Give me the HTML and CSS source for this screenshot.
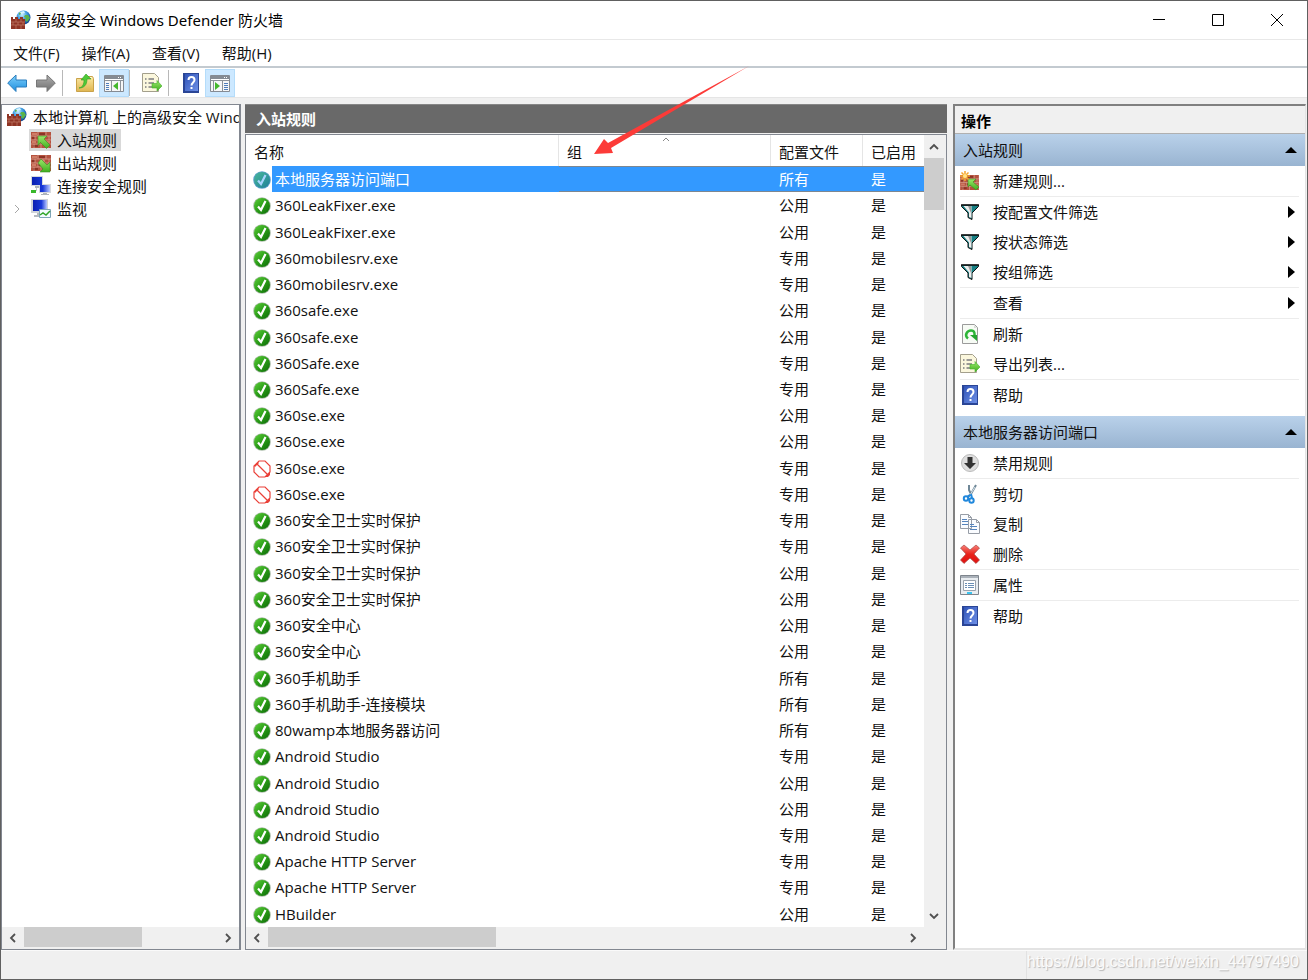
FILE: index.html
```html
<!DOCTYPE html>
<html lang="zh-CN">
<head>
<meta charset="utf-8">
<meta name="viewport" content="width=device-width, initial-scale=1">
<title>高级安全 Windows Defender 防火墙</title>
<link rel="stylesheet" href="styles.css">
</head>
<body>
<svg class="sprite" aria-hidden="true">
<defs>
<linearGradient id="gGreen" x1="0" y1="0" x2="1" y2="1"><stop offset="0" stop-color="#5fd03a"/><stop offset=".5" stop-color="#2a9d17"/><stop offset="1" stop-color="#0c6a08"/></linearGradient>
<linearGradient id="gTeal" x1="0" y1="0" x2="1" y2="1"><stop offset="0" stop-color="#49b89a"/><stop offset="1" stop-color="#1f7f99"/></linearGradient>
<linearGradient id="gBlue" x1="0" y1="0" x2="0" y2="1"><stop offset="0" stop-color="#7fd0fa"/><stop offset="1" stop-color="#1e8fe0"/></linearGradient>
<linearGradient id="gGray" x1="0" y1="0" x2="0" y2="1"><stop offset="0" stop-color="#b0b0b0"/><stop offset="1" stop-color="#6e6e6e"/></linearGradient>
<linearGradient id="gBook" x1="0" y1="0" x2="1" y2="1"><stop offset="0" stop-color="#3054b8"/><stop offset="1" stop-color="#6d8fe6"/></linearGradient>
<linearGradient id="gScreen" x1="0" y1="0" x2="1" y2="0"><stop offset="0" stop-color="#0a1fb0"/><stop offset=".6" stop-color="#1838d8"/><stop offset="1" stop-color="#b8c8ff"/></linearGradient>
<linearGradient id="gArrow" x1="0" y1="0" x2="0" y2="1"><stop offset="0" stop-color="#9be86a"/><stop offset="1" stop-color="#3fae1e"/></linearGradient>
<linearGradient id="gFolder" x1="0" y1="0" x2="0" y2="1"><stop offset="0" stop-color="#fbe9a4"/><stop offset="1" stop-color="#dfb550"/></linearGradient>
<linearGradient id="gRed" x1="0" y1="0" x2="0" y2="1"><stop offset="0" stop-color="#f98078"/><stop offset=".5" stop-color="#e8241c"/><stop offset="1" stop-color="#e01010"/></linearGradient>
<radialGradient id="gGlobe" cx=".4" cy=".3" r=".7"><stop offset="0" stop-color="#c8f0ff"/><stop offset=".5" stop-color="#3d9be0"/><stop offset="1" stop-color="#12458f"/></radialGradient>
</defs>
<symbol id="bricks" viewBox="0 0 20 16">
<path fill="#b5523f" d="M0 0h20v16H0z"/>
<path fill="#cf7c66" d="M1 1h5v2H1zM9 5h5v2H9zM15 9h4v2h-4zM1 9h4v2H1z"/><path fill="#8c3426" d="M8 1h6v2H8zM1 5h3v2H1zM7 9h5v2H7zM2 13h5v2H2z"/>
<path stroke="#d8a592" stroke-width=".7" fill="none" d="M0 4h20M0 8h20M0 12h20M7 0v4M15 0v4M4 4v4M12 4v4M18 4v4M7 8v4M14 8v4M3 12v4M10 12v4M17 12v4"/>
</symbol>
<symbol id="firewall" viewBox="0 0 20 20">
<circle cx="12.500" cy="7.500" r="7" fill="url(#gGlobe)"/>
<path fill="#5cb548" d="M14 5l3 0 2 3-3 4-2-2 1-2-2-1zM8 3l2-1 0 2-2 1z"/><path fill="#d8f4ff" d="M9 2l4-1 1 2-4 1z"/>
<path fill="#8f3424" d="M0 9h14v10H0zM0 7h2v2H0zM4 7h3v2H4zM9 7h3v2H9z"/>
<path stroke="#c07d68" stroke-width=".7" fill="none" d="M0 12h14M0 15h14M5 9v3M10 9v3M2 12v3M7 12v3M12 12v3M5 15v4M10 15v4"/>
</symbol>
<symbol id="inbound" viewBox="0 0 20 20"><use href="#bricks" y="2" width="20" height="16"/><path fill="url(#gArrow)" stroke="#3b8f22" stroke-width=".6" d="M7 6h9l-3 3 6 6-3.500 3.500-6-6-2.500 3z"/></symbol>
<symbol id="outbound" viewBox="0 0 20 20"><use href="#bricks" y="2" width="20" height="16"/><path fill="url(#gArrow)" stroke="#3b8f22" stroke-width=".6" d="M10 6l6 6 3-3v10H9l3-3-5-6z"/></symbol>
<symbol id="newrule" viewBox="0 0 20 20"><use href="#bricks" y="4" width="19" height="15"/><path fill="url(#gArrow)" stroke="#3b8f22" stroke-width=".6" d="M8 8h8l-3 3 6 5-3 3-6-5-2 2z"/><path stroke="#f5a52a" stroke-width="1.500" d="M5 0v10M0 5h10M1.500 1.500l7 7M8.500 1.500l-7 7"/><circle cx="5" cy="5" r="2" fill="#ffe48a"/></symbol>
<symbol id="network" viewBox="0 0 20 20"><path fill="#d7d9dd" d="M0 0h12v10H0zM8 8h12v9H8z"/><path fill="url(#gScreen)" d="M1 1h10v8H1zM9 9h10v7H9z"/><path fill="#aeb4bb" d="M4 10h4v2H4zM12 17h4v1h2v1h-8v-1h2z"/><path fill="none" stroke="#c4c8cc" d="M5.500 12v3"/><path fill="#38b82a" d="M0 14h5v3H0z"/></symbol>
<symbol id="monitor" viewBox="0 0 20 20"><path fill="#cfd3d8" d="M0 0h17v14H0z"/><path fill="url(#gScreen)" d="M2 1h14v11H2z"/><path fill="#b4bac0" d="M6 14h4v2h2v2H3v-2h3z"/><path fill="#f4fbff" stroke="#7fa5b8" d="M8.500 10.500h11v8h-11z"/><path fill="none" stroke="#31a52a" stroke-width="1.500" d="M9 16l3-2 3 2 4-4"/></symbol>
<symbol id="ok" viewBox="0 0 18 18"><circle cx="9" cy="9" r="8.800" fill="#a9bba7"/><circle cx="9" cy="9" r="8" fill="url(#gGreen)"/><path fill="none" stroke="#fff" stroke-width="2.200" d="M5 9.500l3 3.500 4.500-9"/></symbol>
<symbol id="okSel" viewBox="0 0 18 18"><circle cx="9" cy="9" r="8.800" fill="#5f9fd0"/><circle cx="9" cy="9" r="8" fill="url(#gTeal)"/><path fill="none" stroke="#a8d4ff" stroke-width="2.200" d="M5 9.500l3 3.500 4.500-9"/></symbol>
<symbol id="block" viewBox="0 0 18 18"><path fill="#fff" stroke="#ea4038" stroke-width="1.200" d="M6 1h6l5 5v6l-5 5H6l-5-5V6z"/><path stroke="#ea4038" stroke-width="1.200" d="M3.500 3.500l11 11"/><path fill="#ea4038" d="M1 6l4-4 1 1-4 4zM12 17l5-5v3l-2 2z"/></symbol>
<symbol id="back" viewBox="0 0 20 20"><path fill="url(#gBlue)" stroke="#2a7dbd" d="M.700 10L9 2v5h10.500v7H9v4.500z"/></symbol>
<symbol id="forward" viewBox="0 0 20 20"><path fill="url(#gGray)" stroke="#777" d="M19.300 10L11 2v5H.500v7H11v4.500z"/></symbol>
<symbol id="folder" viewBox="0 0 20 20"><path fill="url(#gFolder)" stroke="#c9a24a" d="M1.500 5.500h7l2-2h7l1 2v13h-17z"/><path fill="#fff6cf" d="M11 4h6v1h-6z"/><path fill="#4fca38" stroke="#2f9c22" stroke-width=".600" d="M4 15c4-1 5-4 5-8H6l5-6 5 5h-4c0 6-3 9-8 9z"/></symbol>
<symbol id="paneL" viewBox="0 0 20 20"><path fill="#f7f7f7" stroke="#858b93" d="M.500 2.500h19v16H.500z"/><path fill="#858b93" d="M1 3h18v3H1z"/><path fill="#fff" d="M14 4h1v1h-1zM16 4h1v1h-1zM1 6h18v1H1z"/><path stroke="#8d939a" d="M7.500 8v10M16.500 8v10M1 7.500h18"/><path stroke="#4f7dbb" d="M2 10.500h3M2 12.500h3M2 14.500h3M2 16.500h3"/><path fill="#45b82c" d="M14 9v8l-5-4z"/></symbol>
<symbol id="paneR" viewBox="0 0 20 20"><path fill="#f7f7f7" stroke="#858b93" d="M.500 2.500h19v16H.500z"/><path fill="#858b93" d="M1 3h18v3H1z"/><path fill="#fff" d="M14 4h1v1h-1zM16 4h1v1h-1zM1 6h18v1H1z"/><path stroke="#8d939a" d="M3.500 8v10M12.500 8v10M1 7.500h18"/><path stroke="#4f7dbb" d="M14 10.500h4M14 12.500h4M14 14.500h4M14 16.500h4"/><path fill="#45b82c" d="M5 9v8l5-4z"/></symbol>
<symbol id="export" viewBox="0 0 20 20"><path fill="#fbf7dd" stroke="#a39f8c" d="M.500 .500h12l4 4v14h-16z"/><path stroke="#7c7c80" stroke-width="1.400" stroke-dasharray="1.500 2 8 0" d="M3 6h9M3 10h9M3 14h9"/><path fill="url(#gArrow)" stroke="#43b42b" stroke-width=".600" d="M10 10.500h5V7.500l5 5.500-5 5v-3h-5z"/></symbol>
<symbol id="help" viewBox="0 0 18 20"><path fill="#2a4596" d="M1 0h16v20H1z"/><path fill="url(#gBook)" d="M3 1h13v17H3z"/><path fill="none" stroke="#fff" stroke-width="2" d="M6.500 7c0-4 6-4 6 0 0 2.500-3 2.500-3 5.500"/><path fill="#fff" d="M8.500 14h2v2h-2z"/></symbol>
<symbol id="filter" viewBox="0 0 20 20"><path fill="#178083" stroke="#111" d="M1.500 3h17v1.500L12 11v6.500l-4-2V11L1.500 4.500z"/><path fill="#eee" d="M3.500 4h8v12l-2.500-1v-4.500z"/><path fill="#999" d="M8 4h3v7z"/><path stroke="#111" stroke-width="1.300" d="M1 3h18"/></symbol>
<symbol id="refresh" viewBox="0 0 20 20"><path fill="#f7fbf5" stroke="#9b9b9b" d="M2.500 .500h12l3 3v16h-15z"/><path fill="#d8dcd8" d="M14 1v3h3z"/><path fill="none" stroke="#2db538" stroke-width="2.500" d="M8 14.500c-4-3-1-8 3-8 4 0 4 4 3 6"/><path fill="#24a62f" d="M10 11h7v6z"/></symbol>
<symbol id="disable" viewBox="0 0 20 20"><circle cx="10" cy="10" r="8.500" fill="#dedede" stroke="#bbb"/><path fill="#333" d="M7.500 4h5v6H16l-6 6-6-6h3.500z"/></symbol>
<symbol id="cut" viewBox="0 0 20 20"><path fill="none" stroke="#6f8797" stroke-width="2" d="M9 1v5l2 4M16 1l-5 9-3 3"/><path stroke="#d5e3ec" d="M15 3l-5 8"/><circle cx="6" cy="14.500" r="2.200" fill="none" stroke="#2188dc" stroke-width="2"/><circle cx="11.500" cy="16.500" r="2.200" fill="none" stroke="#2188dc" stroke-width="2"/><path stroke="#2188dc" stroke-width="2" d="M11 10l1 4M10 11l-3 2"/></symbol>
<symbol id="copy" viewBox="0 0 20 20"><path fill="#fafcff" stroke="#979da6" d="M.500 .500h8l3 3v11H.500zM8.500 5.500h8l3 3v11h-11z"/><path stroke="#5584bd" d="M2 5.500h5M2 7.500h6M2 10.500h6M10 10.500h4M10 12.500h7M10 15.500h7"/><path fill="none" stroke="#979da6" d="M8.500 .500v3h3M16.500 5.500v3h3"/></symbol>
<symbol id="delete" viewBox="0 0 20 20"><path fill="url(#gRed)" stroke="#a84a46" stroke-width=".700" d="M4 1l6 5 6-5 3.500 3-5.500 6 5.500 6-3.500 3.500-6-5.500-6 5.500L.500 16 6 10 .500 4z"/></symbol>
<symbol id="props" viewBox="0 0 20 20"><path fill="#e9edf1" stroke="#7e858d" d="M.500 .500h18v19H.500z"/><path fill="#aab1b9" d="M1 1h17v2H1z"/><path fill="#fff" stroke="#9aa3ad" d="M3.500 5.500h12v10h-12z"/><path stroke="#6b8fb5" d="M5 8.500h2M8 8.500h6M5 10.500h2M8 10.500h6M5 12.500h2M8 12.500h6"/><path fill="#39c3f0" d="M7 17h5v2H7z"/></symbol>
<symbol id="chev" viewBox="0 0 10 10"><path fill="none" stroke="#505050" stroke-width="1.800" d="M7 1L3 5l4 4"/></symbol>
</svg>

<div class="window">
<header class="titlebar">
<svg class="icon"><use href="#firewall"/></svg>
<h1>高级安全 Windows Defender 防火墙</h1>
<div class="controls">
<button type="button" aria-label="最小化"><svg viewBox="0 0 12 12"><path d="M0 5.500h12"/></svg></button>
<button type="button" aria-label="最大化"><svg viewBox="0 0 12 12"><path d="M.500 .500h11v11H.500z"/></svg></button>
<button type="button" aria-label="关闭"><svg viewBox="0 0 12 12"><path d="M0 0l12 12M12 0L0 12"/></svg></button>
</div>
</header>
<nav class="menubar">
<button type="button">文件(F)</button><button type="button">操作(A)</button><button type="button">查看(V)</button><button type="button">帮助(H)</button>
</nav>
<div class="toolbar">
<button type="button" aria-label="后退"><svg class="icon"><use href="#back"/></svg></button>
<button type="button" aria-label="前进"><svg class="icon"><use href="#forward"/></svg></button>
<span class="divider"></span>
<button type="button" aria-label="上一级"><svg class="icon"><use href="#folder"/></svg></button>
<button type="button" class="on" aria-label="显示控制台树"><svg class="icon"><use href="#paneL"/></svg></button>
<span class="divider"></span>
<button type="button" aria-label="导出列表"><svg class="icon"><use href="#export"/></svg></button>
<span class="divider"></span>
<button type="button" aria-label="帮助"><svg class="icon"><use href="#help"/></svg></button>
<button type="button" class="on" aria-label="显示操作窗格"><svg class="icon"><use href="#paneR"/></svg></button>
</div>

<main class="panes">
<section class="tree-pane">
<ul class="tree">
<li class="root"><svg class="icon"><use href="#firewall"/></svg><span>本地计算机 上的高级安全 Windows Defender 防火墙</span></li>
<li><span class="node current"><svg class="icon"><use href="#inbound"/></svg>入站规则</span></li>
<li><span class="node"><svg class="icon"><use href="#outbound"/></svg>出站规则</span></li>
<li><span class="node"><svg class="icon"><use href="#network"/></svg>连接安全规则</span></li>
<li class="closed"><svg class="expander" viewBox="0 0 10 10"><path d="M3 1l4 4-4 4"/></svg><span class="node"><svg class="icon"><use href="#monitor"/></svg>监视</span></li>
</ul>
<div class="hscroll"><button type="button" aria-label="向左"><svg><use href="#chev"/></svg></button><div class="track"><div class="thumb half"></div></div><button type="button" aria-label="向右"><svg class="flip"><use href="#chev"/></svg></button></div>
</section>

<section class="rules-pane">
<h2>入站规则</h2>
<div class="listbox">
<div class="rules">
<table>
<colgroup><col><col class="c-group"><col class="c-profile"><col class="c-enabled"></colgroup>
<thead><tr><th>名称</th><th><div class="sorted">组<svg class="sort" viewBox="0 0 8 5"><path d="M1 4l3-3 3 3"/></svg></div></th><th>配置文件</th><th>已启用</th></tr></thead>
<tbody>
<tr class="selected"><td><svg><use href="#okSel"/></svg>本地服务器访问端口</td><td></td><td>所有</td><td>是</td></tr>
<tr><td><svg><use href="#ok"/></svg>360LeakFixer.exe</td><td></td><td>公用</td><td>是</td></tr>
<tr><td><svg><use href="#ok"/></svg>360LeakFixer.exe</td><td></td><td>公用</td><td>是</td></tr>
<tr><td><svg><use href="#ok"/></svg>360mobilesrv.exe</td><td></td><td>专用</td><td>是</td></tr>
<tr><td><svg><use href="#ok"/></svg>360mobilesrv.exe</td><td></td><td>专用</td><td>是</td></tr>
<tr><td><svg><use href="#ok"/></svg>360safe.exe</td><td></td><td>公用</td><td>是</td></tr>
<tr><td><svg><use href="#ok"/></svg>360safe.exe</td><td></td><td>公用</td><td>是</td></tr>
<tr><td><svg><use href="#ok"/></svg>360Safe.exe</td><td></td><td>专用</td><td>是</td></tr>
<tr><td><svg><use href="#ok"/></svg>360Safe.exe</td><td></td><td>专用</td><td>是</td></tr>
<tr><td><svg><use href="#ok"/></svg>360se.exe</td><td></td><td>公用</td><td>是</td></tr>
<tr><td><svg><use href="#ok"/></svg>360se.exe</td><td></td><td>公用</td><td>是</td></tr>
<tr><td><svg><use href="#block"/></svg>360se.exe</td><td></td><td>专用</td><td>是</td></tr>
<tr><td><svg><use href="#block"/></svg>360se.exe</td><td></td><td>专用</td><td>是</td></tr>
<tr><td><svg><use href="#ok"/></svg>360安全卫士实时保护</td><td></td><td>专用</td><td>是</td></tr>
<tr><td><svg><use href="#ok"/></svg>360安全卫士实时保护</td><td></td><td>专用</td><td>是</td></tr>
<tr><td><svg><use href="#ok"/></svg>360安全卫士实时保护</td><td></td><td>公用</td><td>是</td></tr>
<tr><td><svg><use href="#ok"/></svg>360安全卫士实时保护</td><td></td><td>公用</td><td>是</td></tr>
<tr><td><svg><use href="#ok"/></svg>360安全中心</td><td></td><td>公用</td><td>是</td></tr>
<tr><td><svg><use href="#ok"/></svg>360安全中心</td><td></td><td>公用</td><td>是</td></tr>
<tr><td><svg><use href="#ok"/></svg>360手机助手</td><td></td><td>所有</td><td>是</td></tr>
<tr><td><svg><use href="#ok"/></svg>360手机助手-连接模块</td><td></td><td>所有</td><td>是</td></tr>
<tr><td><svg><use href="#ok"/></svg>80wamp本地服务器访问</td><td></td><td>所有</td><td>是</td></tr>
<tr><td><svg><use href="#ok"/></svg>Android Studio</td><td></td><td>专用</td><td>是</td></tr>
<tr><td><svg><use href="#ok"/></svg>Android Studio</td><td></td><td>公用</td><td>是</td></tr>
<tr><td><svg><use href="#ok"/></svg>Android Studio</td><td></td><td>公用</td><td>是</td></tr>
<tr><td><svg><use href="#ok"/></svg>Android Studio</td><td></td><td>专用</td><td>是</td></tr>
<tr><td><svg><use href="#ok"/></svg>Apache HTTP Server</td><td></td><td>专用</td><td>是</td></tr>
<tr><td><svg><use href="#ok"/></svg>Apache HTTP Server</td><td></td><td>专用</td><td>是</td></tr>
<tr><td><svg><use href="#ok"/></svg>HBuilder</td><td></td><td>公用</td><td>是</td></tr>
</tbody>
</table>
<div class="vscroll"><button type="button" aria-label="向上"><svg class="up"><use href="#chev"/></svg></button><div class="track"><div class="thumb"></div></div><button type="button" aria-label="向下"><svg class="down"><use href="#chev"/></svg></button></div>
</div>
<div class="hscroll wide"><button type="button" aria-label="向左"><svg><use href="#chev"/></svg></button><div class="track"><div class="thumb third"></div></div><button type="button" aria-label="向右"><svg class="flip"><use href="#chev"/></svg></button></div>
</div>
</section>

<aside class="actions">
<h2>操作</h2>
<h3>入站规则<svg viewBox="0 0 12 6"><path d="M0 6l6-6 6 6z"/></svg></h3>
<ul>
<li class="rule"><button type="button"><svg class="icon"><use href="#newrule"/></svg>新建规则...</button></li>
<li><button type="button"><svg class="icon"><use href="#filter"/></svg>按配置文件筛选<svg class="more" viewBox="0 0 7 12"><path d="M0 0l7 6-7 6z"/></svg></button></li>
<li><button type="button"><svg class="icon"><use href="#filter"/></svg>按状态筛选<svg class="more" viewBox="0 0 7 12"><path d="M0 0l7 6-7 6z"/></svg></button></li>
<li class="rule"><button type="button"><svg class="icon"><use href="#filter"/></svg>按组筛选<svg class="more" viewBox="0 0 7 12"><path d="M0 0l7 6-7 6z"/></svg></button></li>
<li class="rule"><button type="button"><span class="icon"></span>查看<svg class="more" viewBox="0 0 7 12"><path d="M0 0l7 6-7 6z"/></svg></button></li>
<li><button type="button"><svg class="icon"><use href="#refresh"/></svg>刷新</button></li>
<li class="rule"><button type="button"><svg class="icon"><use href="#export"/></svg>导出列表...</button></li>
<li><button type="button"><svg class="icon"><use href="#help"/></svg>帮助</button></li>
</ul>
<h3>本地服务器访问端口<svg viewBox="0 0 12 6"><path d="M0 6l6-6 6 6z"/></svg></h3>
<ul>
<li class="rule"><button type="button"><svg class="icon"><use href="#disable"/></svg>禁用规则</button></li>
<li><button type="button"><svg class="icon"><use href="#cut"/></svg>剪切</button></li>
<li><button type="button"><svg class="icon"><use href="#copy"/></svg>复制</button></li>
<li class="rule"><button type="button"><svg class="icon"><use href="#delete"/></svg>删除</button></li>
<li class="rule"><button type="button"><svg class="icon"><use href="#props"/></svg>属性</button></li>
<li><button type="button"><svg class="icon"><use href="#help"/></svg>帮助</button></li>
</ul>
</aside>
</main>
<footer class="statusbar"><span class="cell">https://blog.csdn.net/weixin_44797490</span></footer>
<svg class="pointer" viewBox="0 0 156 90" aria-hidden="true"><path d="M0 88L10 73l4 4L155 0 17 82l2 5z"/></svg>
</div>
</body>
</html>
```
FILE: styles.css
```css
* { box-sizing: border-box; }
html { height: 100%; }
body {
  margin: 0;
  min-height: 100%;
  display: flex;
  flex-direction: column;
  font: 15px/22px "Open Sans", "Noto Sans CJK SC", sans-serif;
  color: #111;
}
h1, h2, h3, ul { margin: 0; padding: 0; font-size: 15px; font-weight: 400; }
ul { list-style: none; }
button { margin: 0; padding: 0; border: 0; background: none; font: inherit; color: inherit; }
svg { display: block; flex: none; }
.sprite { width: 0; height: 0; }
.icon { width: 20px; height: 20px; flex: none; }

.window {
  position: relative;
  flex: 1;
  display: flex;
  flex-direction: column;
  border: 1px solid #606060;
  background: #f0f0f0;
}

.titlebar {
  height: 39px;
  display: flex;
  align-items: center;
  gap: 5px;
  padding: 0 1px 1px 10px;
  background: #fff;
  border-bottom: 1px solid #e8e8e8;
}
.titlebar h1 { flex: 1; font-family: "Noto Sans", "Noto Sans CJK SC", sans-serif; color: #000; }
.controls { display: flex; }
.controls button { width: 59px; height: 37px; display: grid; place-items: center; }
.controls svg { width: 12px; height: 12px; fill: none; stroke: #000; }

.menubar {
  height: 28px;
  display: flex;
  align-items: center;
  gap: 22px;
  padding: 0 12px 1px;
  background: #fff;
  border-bottom: 2px solid #c3cad0;
}

.toolbar {
  height: 30px;
  display: flex;
  align-items: center;
  padding-left: 1px;
  background: #fff;
  border-bottom: 1px solid #e5e5e5;
}
.toolbar button { width: 29px; height: 28px; display: grid; place-items: center; }
.toolbar .on { width: 30px; background: #cce8ff; border: 1px solid #b4dcfa; }
.toolbar .divider { width: 1px; height: 26px; background: #b8b8b8; }
.toolbar .divider + button { margin-left: 7px; }
.toolbar button + .divider { margin-left: 2px; }
.toolbar .on + .divider { margin-left: 0; }

.panes {
  flex: 1;
  display: grid;
  grid-template-columns: 240px minmax(0, 1fr) 355px;
  gap: 4px;
  padding: 6px 1px 0 0;
}

.tree-pane {
  display: flex;
  flex-direction: column;
  min-width: 0;
  background: #fff;
  border: 1px solid #828790;
  border-right-width: 2px;
}
.tree { flex: 1; }
.tree li { height: 23px; display: flex; align-items: center; padding-left: 27px; white-space: nowrap; }
.tree .root { gap: 6px; padding-left: 5px; }
.root span { flex: 1; min-width: 0; overflow: hidden; }
.tree .closed { padding-left: 10px; gap: 7px; }
.node { display: flex; align-items: center; gap: 6px; padding: 0 4px 0 2px; }
.node.current { background: #d9d9d9; }
.expander { width: 10px; height: 10px; fill: none; stroke: #a6a6a6; }

.hscroll { height: 22px; display: flex; padding-bottom: 1px; background: #f0f0f0; }
.hscroll button { width: 22px; display: grid; place-items: center; }
.hscroll svg, .vscroll svg { width: 10px; height: 10px; }
.hscroll .track { flex: 1; }
.thumb { background: #cdcdcd; }
.hscroll .thumb { height: 20px; }
.half { width: 61%; }
.third { width: 36%; }
.flip { transform: rotate(180deg); }
.up { transform: rotate(90deg); }
.down { transform: rotate(-90deg); }
.hscroll.wide { padding-right: 22px; }

.rules-pane { display: flex; flex-direction: column; min-width: 0; }
.rules-pane h2 {
  height: 29px;
  padding: 0 11px;
  line-height: 29px;
  background: #696969;
  border-top: 1px solid #868686;
  color: #fff;
  font-weight: 700;
}
.listbox {
  flex: 1;
  display: flex;
  flex-direction: column;
  margin-top: 1px;
  background: #fff;
  border: 1px solid #828790;
}
.rules { flex: 1; display: grid; grid-template-columns: minmax(0, 1fr) 22px; }
.rules table {
  width: 100%;
  height: 100%;
  table-layout: fixed;
  border-collapse: separate;
  border-spacing: 0;
}
.c-group { width: 212px; }
.c-profile { width: 92px; }
.c-enabled { width: 61px; }
th { height: 31px; padding: 2px 8px 0; font-weight: 400; text-align: left; border-right: 1px solid #e5e5e5; }
th:last-child { border-right: 0; padding-right: 0; }
.sorted { display: flex; gap: 80px; margin-top: -4px; padding-top: 4px; }
.sort { width: 8px; height: 5px; margin-top: -4px; fill: none; stroke: #888; }
td { padding: 0 8px; line-height: 22px; white-space: nowrap; }
td:first-child { padding-left: 7px; }
td svg { width: 18px; height: 18px; display: inline-block; vertical-align: -4px; margin-right: 4px; }
.selected td { background: #3399ff; color: #fff; box-shadow: inset 0 1px #7d8791, inset 0 -1px #7d8791; }
.selected td:first-child { box-shadow: none; background: linear-gradient(90deg, #fff 26px, #3399ff 26px); }

.vscroll { display: flex; flex-direction: column; background: #f0f0f0; }
.vscroll button { width: 20px; height: 23px; display: grid; place-items: center; }
.vscroll .track { flex: 1; }
.vscroll .thumb { width: 20px; height: 52px; }

.actions {
  margin-left: 2px;
  background: #fff;
  border: 2px solid #808080;
  border-right: 1px solid #e3e3e3;
  border-bottom: 2px solid #e3e3e3;
}
.actions h2 { height: 28px; padding: 0 6px; line-height: 30px; font-weight: 700; background: #f0f0f0; border-bottom: 1px solid #b0b0b0; color: #000; }
.actions h3 {
  height: 32px;
  display: flex;
  align-items: center;
  justify-content: space-between;
  padding: 0 8px;
  background: linear-gradient(#b9d1ea, #99b4d1);
}
.actions h3 svg { width: 12px; height: 6px; }
.actions ul { padding: 0 6px 0 5px; }
.actions ul + h3 { margin-top: 6px; }
.rule { border-bottom: 1px solid #ececec; }
.actions button { width: 100%; height: 30px; display: flex; align-items: center; gap: 13px; text-align: left; }
.more { width: 7px; height: 12px; margin-left: auto; margin-right: 4px; }

.statusbar { height: 29px; display: flex; justify-content: flex-end; border-top: 1px solid #fafafa; }
.cell {
  padding-right: 8px;
  border-left: 1px solid #e2e2e2;
  font: 16px/22px "Liberation Sans", sans-serif;
  color: #fbfbfb;
  text-shadow: 1px 1px 1px #b8b8b8;
}

/* Annotation arrow drawn over the header */
.pointer { position: absolute; left: 593px; top: 65px; width: 156px; height: 90px; fill: #fc3b38; pointer-events: none; }
```
